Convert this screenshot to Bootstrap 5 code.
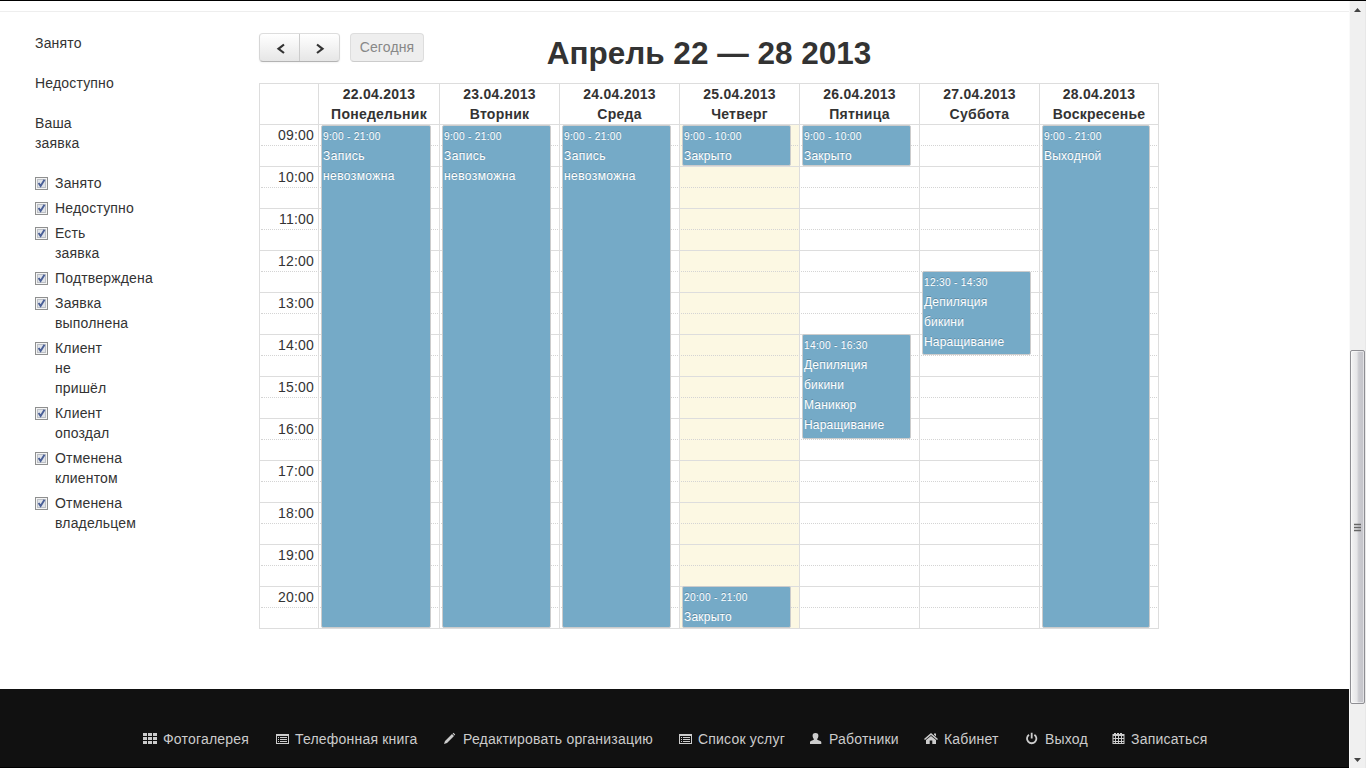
<!DOCTYPE html>
<html lang="ru">
<head>
<meta charset="utf-8">
<title>Календарь записи</title>
<link href="https://cdn.jsdelivr.net/npm/bootstrap@5.3.0/dist/css/bootstrap.min.css" rel="stylesheet">
<style>
html,body{height:768px;overflow:hidden}
body{font:14px/20px "Liberation Sans",Arial,sans-serif;color:#333;background:#fff}
.window{width:1366px;height:768px;border-top:1px solid #000}
.page{width:1349px}
.rule{margin:10px 0 21px;height:1px;background:#eee}
.side{width:259px;padding-left:35px;letter-spacing:.17px}
.legend-list p{margin:0 0 20px}
.filters label{display:flex;margin-bottom:5px}
.filters svg{width:13px;height:13px;margin:4px 7px 0 0;flex:none}
.toolbar{height:50px;position:relative}
.arrows{height:29px;width:81px;border:1px solid #ccc;border-color:#ddd #d6d6d6 #b3b3b3;border-radius:4px;background:linear-gradient(#fff,#e6e6e6);box-shadow:0 1px 2px rgba(0,0,0,.05)}
.arrows button{border:0;background:none;padding:0;width:39px;height:27px}
.arrows button+button{border-left:1px solid #ccc;width:40px}
.arrows svg{display:block;margin:auto}
.today{height:29px;width:74px;margin-left:10px;border:1px solid #ddd;border-bottom-color:#ccc;border-radius:4px;background:#eee;color:#888;font-size:14px;line-height:20px;padding:0 0 1px;text-align:center;letter-spacing:.15px}
.cal-title{font-size:31.5px;line-height:40px;font-weight:700;margin:0 auto;width:400px;position:absolute;left:250px;top:0;text-align:center;white-space:nowrap}
.cal{width:900px;height:546px;border:1px solid #ddd}
.cal-row{display:grid;grid-template-columns:58px 121px repeat(5,120px) 119px}
.cal-row>*+*{border-left:1px solid #ddd}
.heads{height:40px;font-weight:700;text-align:center}
.heads div{white-space:nowrap;letter-spacing:.25px}
.bodyrow{height:504px;position:relative}
.hours div{height:42px;border-top:1px solid #ddd;text-align:right;padding-right:4px;position:relative;letter-spacing:.2px}
.col-day,.hours{position:relative}
.slot{height:42px;border-top:1px solid #ddd;padding:20px 1px 0}
.slot:after,.hours div:after{content:"";display:block;border-top:1px dotted #d4d4d4}
.hours div:after{margin:0 -3px 0 1px}
.now{background:#fcf8e3}
.ev{position:absolute;left:2px;width:109px;background:#75aac7;border:1px solid #ccc;border-radius:2px;color:#fff;font-size:12px;line-height:20px;padding:0 1px;text-shadow:0 -1px 0 rgba(0,0,0,.2);overflow:hidden;z-index:1;letter-spacing:.2px}
.ev small{display:block;font-size:10.2px;line-height:20px;height:20px;padding-top:1px;letter-spacing:.28px}
.ev .off{letter-spacing:.42px}
.foot{height:79px;background:#111;border-bottom:1px solid #000;padding:40px 0 0 143px}
.foot nav{display:grid;grid-template-columns:132px 168px 235px 131px 115px 101px 86px 100px;letter-spacing:.2px}
.foot a{color:#ccc;text-decoration:none;white-space:nowrap;display:flex}
.foot svg{width:14px;height:14px;margin:3px 6px 0 0;flex:none;fill:#ccc}
.sbar{width:17px;height:767px;background:#f0f0f0;border-left:1px solid #fafafa;border-right:1px solid #e8e8e8}
.thumb{height:354px;width:15px;border:1px solid #8e8e93;border-radius:2px;background:linear-gradient(90deg,#f4f4f4,#e6e6e8 45%,#cbcbd0 60%,#c4c4ca);box-shadow:inset 0 0 0 1px rgba(255,255,255,.5)}
</style>
</head>
<body>
<div class="window d-flex">
 <div class="page d-flex flex-column">
  <div class="rule flex-shrink-0"></div>
  <main class="d-flex flex-grow-1">
   <aside class="side">
    <div class="legend-list"><p>Занято</p><p>Недоступно</p><p>Ваша<br>заявка</p></div>
    <div class="filters" id="filters"></div>
   </aside>
   <section>
    <div class="toolbar d-flex align-items-start">
     <div class="arrows d-flex">
      <button type="button" aria-label="Назад"><svg width="14" height="14" viewBox="0 0 14 14"><path d="M11 3.500 5.500 7.800 11 12" fill="none" stroke="#333" stroke-width="2.200"/></svg></button>
      <button type="button" aria-label="Вперёд"><svg width="14" height="14" viewBox="0 0 14 14"><path d="M4 3.500 9.500 7.800 4 12" fill="none" stroke="#333" stroke-width="2.200"/></svg></button>
     </div>
     <button type="button" class="today">Сегодня</button>
     <h2 class="cal-title">Апрель 22 — 28 2013</h2>
    </div>
    <div class="cal">
     <div class="cal-row heads"><div></div><div>22.04.2013<br>Понедельник</div><div>23.04.2013<br>Вторник</div><div>24.04.2013<br>Среда</div><div>25.04.2013<br>Четверг</div><div>26.04.2013<br>Пятница</div><div>27.04.2013<br>Суббота</div><div>28.04.2013<br>Воскресенье</div></div>
     <div class="cal-row bodyrow" id="grid"></div>
    </div>
   </section>
  </main>
  <footer class="foot flex-shrink-0">
   <nav>
    <a href="#"><svg viewBox="0 0 14 14"><path d="M0 1h4v3H0zM5 1h4v3H5zM10 1h4v3h-4zM0 5h4v3H0zM5 5h4v3H5zM10 5h4v3h-4zM0 9h4v3H0zM5 9h4v3H5zM10 9h4v3h-4z"/></svg>Фотогалерея</a>
    <a href="#"><svg viewBox="0 0 14 14"><path fill-rule="evenodd" d="M1 2h13v10H1zM2 4v7h11V4zM3 5h1v1H3zM5 5h7v1H5zM3 7h1v1H3zM5 7h7v1H5zM3 9h1v1H3zM5 9h7v1H5z"/></svg>Телефонная книга</a>
    <a href="#"><svg viewBox="0 0 14 14"><path d="M1 12 2 9 9 2 11 4 4 11zM9.600 1.500 10.500 .8 12.200 2.500 11.500 3.400z"/></svg>Редактировать организацию</a>
    <a href="#"><svg viewBox="0 0 14 14"><path fill-rule="evenodd" d="M1 2h13v10H1zM2 4v7h11V4zM3 5h1v1H3zM5 5h7v1H5zM3 7h1v1H3zM5 7h7v1H5zM3 9h1v1H3zM5 9h7v1H5z"/></svg>Список услуг</a>
    <a href="#"><svg viewBox="0 0 14 14"><path d="M6.500 1C8.700 1 9.500 2.200 9.400 4 9.300 5.500 8.500 6.500 8.200 7v.8c1.500.6 3.900 1 4.100 2.200V12H1v-2C1.200 8.800 3.300 8.400 4.800 7.800V7C4.500 6.500 3.700 5.500 3.600 4 3.500 2.200 4.300 1 6.500 1z"/></svg>Работники</a>
    <a href="#"><svg viewBox="0 0 14 14"><path d="M7 1 14 7 13 8 7 3 1 8 0 7 2 5.300zM10 1.500h2v3l-2-1.700zM7 4 12 8v4H8.300V8.500H5.700V12H2V8z"/></svg>Кабинет</a>
    <a href="#"><svg viewBox="0 0 14 14"><path d="M4 2.700A4.700 4.700 0 1 0 9.400 2.700M6.700 .8v5.700" fill="none" stroke="#ccc" stroke-width="1.800"/></svg>Выход</a>
    <a href="#"><svg viewBox="0 0 14 14"><path fill-rule="evenodd" d="M3 1h2v1h1V1h2v1h1V1h2v1h2.500v10H1.500V2H3zM2.500 4v2H4V4zM5 4v2h2V4zM8 4v2h2V4zM11 4v2h1.500V4zM2.500 7v2H4V7zM5 7v2h2V7zM8 7v2h2V7zM11 7v2h1.500V7zM2.500 10v1H4v-1zM5 10v1h2v-1zM8 10v1h2v-1zM11 10v1h1.500v-1z"/></svg>Записаться</a>
   </nav>
  </footer>
 </div>
 <div class="sbar d-flex flex-column align-items-center">
  <svg class="flex-shrink-0" width="15" height="349"><path d="M4 11 7.500 7 11 11z" fill="#444"/></svg>
  <div class="thumb flex-shrink-0 d-flex align-items-center justify-content-center"><svg width="7" height="9"><path d="M0 1.500h7M0 4.500h7M0 7.500h7" stroke="#666" stroke-width="1.300"/></svg></div>
  <svg width="15" height="64"><path d="M4 54h7l-3.500 4z" fill="#444"/></svg>
 </div>
</div>
<script src="https://cdn.jsdelivr.net/npm/bootstrap@5.3.0/dist/js/bootstrap.bundle.min.js"></script>
<script>
const check='<svg viewBox="0 0 13 13"><rect x=".5" y=".5" width="12" height="12" fill="#f4f4f4" stroke="#8e8f8f"/><rect x="2.500" y="2.500" width="8" height="8" fill="#e0e3e8" stroke="#bcc0c6"/><path d="M3.600 6 5.600 9 9.500 2.800" fill="none" stroke="#4a5f97" stroke-width="1.900"/></svg>';
document.getElementById('filters').innerHTML=['Занято','Недоступно','Есть<br>заявка','Подтверждена','Заявка<br>выполнена','Клиент<br>не<br>пришёл','Клиент<br>опоздал','Отменена<br>клиентом','Отменена<br>владельцем'].map(t=>`<label>${check}<span>${t}</span></label>`).join('');
// [start, end, time label, title]
const off=[9,21,'9:00 - 21:00','<span class="off">Запись<br>невозможна</span>'];
const days=[[off],[off],[off],[[9,10,'9:00 - 10:00','Закрыто'],[20,21,'20:00 - 21:00','Закрыто']],[[9,10,'9:00 - 10:00','Закрыто'],[14,16.5,'14:00 - 16:30','Депиляция<br>бикини<br>Маникюр<br>Наращивание']],[[12.5,14.5,'12:30 - 14:30','Депиляция<br>бикини<br>Наращивание']],[[9,21,'9:00 - 21:00','Выходной']]];
let h='<div class="hours">';
for(let i=9;i<21;i++)h+=`<div>${String(i).padStart(2,'0')}:00</div>`;
h+='</div>';
days.forEach((d,i)=>{
 h+=`<div class="col-day${i==3?' now':''}">`+'<div class="slot"></div>'.repeat(12);
 d.forEach(e=>{const top=Math.max(1,(e[0]-9)*42),w=i==0?110:i==6?108:109;
  h+=`<div class="ev" style="top:${top}px;height:${(e[1]-9)*42-top}px;width:${w}px"><small>${e[2]}</small>${e[3]}</div>`});
 h+='</div>';
});
document.getElementById('grid').innerHTML=h;
</script>
</body>
</html>
